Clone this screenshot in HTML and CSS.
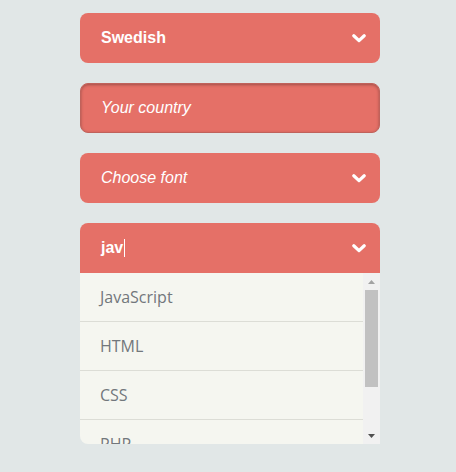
FILE: index.html
```html
<!DOCTYPE html>
<html lang="en">
<head>
<meta charset="utf-8">
<title>Select fields</title>
<link rel="stylesheet" href="styles.css">
</head>
<body>
<div class="form">
  <div class="field select">
    <span class="value">Swedish</span>
    <svg class="chev" width="14" height="9" viewBox="0 0 14 9"><polyline points="1.8,1.8 7,6.6 12.2,1.8" fill="none" stroke="#fff" stroke-width="3.2" stroke-linecap="round" stroke-linejoin="round"/></svg>
  </div>
  <div class="field input">
    <span class="placeholder">Your country</span>
  </div>
  <div class="field select">
    <span class="placeholder">Choose font</span>
    <svg class="chev" width="14" height="9" viewBox="0 0 14 9"><polyline points="1.8,1.8 7,6.6 12.2,1.8" fill="none" stroke="#fff" stroke-width="3.2" stroke-linecap="round" stroke-linejoin="round"/></svg>
  </div>
  <div class="combo">
    <div class="field select open">
      <span class="value">jav<span class="caret"></span></span>
      <svg class="chev" width="14" height="9" viewBox="0 0 14 9"><polyline points="1.8,1.8 7,6.6 12.2,1.8" fill="none" stroke="#fff" stroke-width="3.2" stroke-linecap="round" stroke-linejoin="round"/></svg>
    </div>
    <div class="listbox">
      <ul class="options">
        <li>JavaScript</li>
        <li>HTML</li>
        <li>CSS</li>
        <li>PHP</li>
        <li>Python</li>
      </ul>
      <div class="scrollbar">
        <div class="sb-btn">
          <svg width="7" height="4" viewBox="0 0 7 4"><polygon points="0,4 3.5,0 7,4" fill="#a3a3a3"/></svg>
        </div>
        <div class="sb-track"><div class="sb-thumb"></div></div>
        <div class="sb-btn">
          <svg width="7" height="4" viewBox="0 0 7 4"><polygon points="0,0 7,0 3.5,4" fill="#505050"/></svg>
        </div>
      </div>
    </div>
  </div>
</div>
</body>
</html>
```

FILE: styles.css
```css
html, body {
  margin: 0;
  padding: 0;
  background: #e1e7e7;
  height: 100%;
  overflow: hidden;
}

.form {
  width: 300px;
  margin: 13px 0 0 80px;
  display: flex;
  flex-direction: column;
  gap: 20px;
}

.field {
  box-sizing: border-box;
  height: 50px;
  background: #e57067;
  border-radius: 8px;
  display: flex;
  align-items: center;
  justify-content: space-between;
  padding: 0 14px 0 21px;
  color: #fff;
  font-family: "Liberation Sans", Arial, sans-serif;
  font-size: 16px;
}

.field.input {
  border: 1px solid #c0625b;
  box-shadow: inset 0 1px 3px rgba(0, 0, 0, 0.3);
  padding-left: 20px;
}

.value {
  font-weight: bold;
  display: flex;
  align-items: center;
  margin-top: -1px;
}

.placeholder {
  font-style: italic;
  font-size: 16px;
}

.caret {
  display: inline-block;
  width: 1px;
  height: 18px;
  background: #fff;
  margin-left: 1px;
}

.chev {
  display: block;
  margin-top: 1px;
}

.field.open {
  border-radius: 8px 8px 0 0;
}

/* dropdown panel: option list plus its scrollbar */
.listbox {
  display: flex;
  height: 171px;
  background: #f5f6f0;
  border-radius: 0 0 0 8px;
  overflow: hidden;
}

.options {
  flex: 1;
  list-style: none;
  margin: 0;
  padding: 0;
  overflow: hidden;
}

.options li {
  height: 49px;
  box-sizing: border-box;
  border-bottom: 1px solid #dcddd6;
  padding: 1px 20px 1px;
  display: flex;
  align-items: center;
  font-family: "Open Sans", Lato, sans-serif;
  font-size: 16px;
  color: #72777c;
}

.scrollbar {
  width: 17px;
  background: #f1f1f1;
  display: flex;
  flex-direction: column;
}

.sb-btn {
  height: 17px;
  display: flex;
  align-items: center;
  justify-content: center;
}

.sb-btn svg {
  display: block;
}

.sb-track {
  flex: 1;
  padding: 0 2px;
}

.sb-thumb {
  height: 97px;
  background: #c1c1c1;
}
```
